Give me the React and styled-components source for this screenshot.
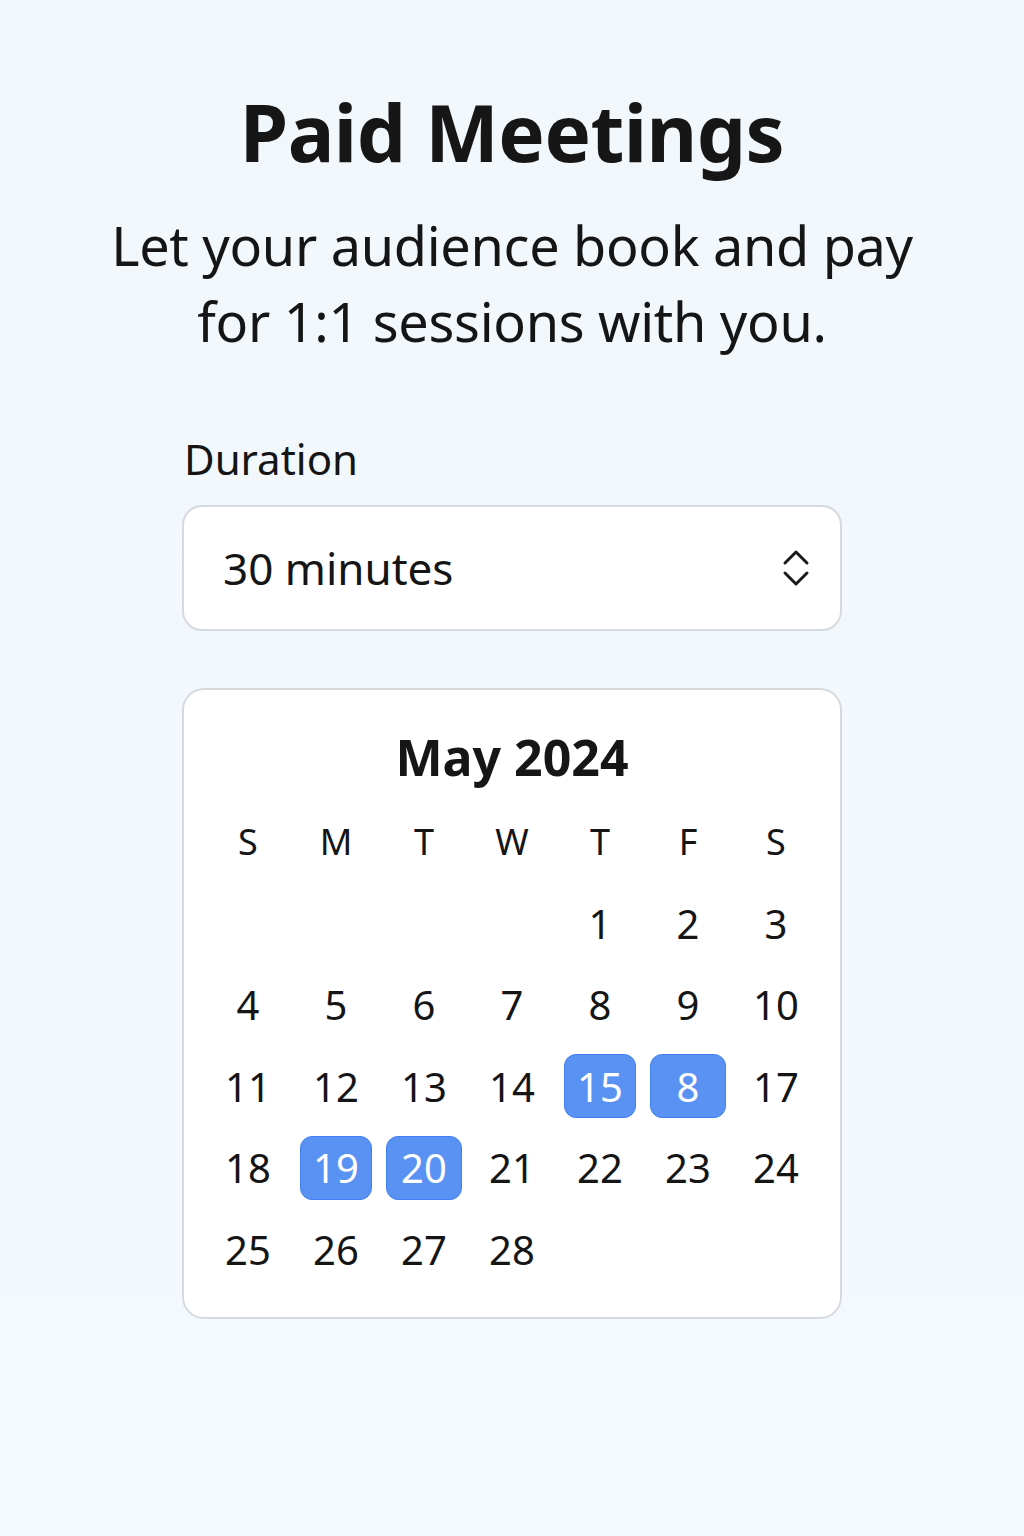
import React from "react";
import styled, { createGlobalStyle } from "styled-components";

const Global = createGlobalStyle`
  html, body { margin: 0; padding: 0; background: #f3f9fd; }
  body { font-family: "Noto Sans", "Open Sans", sans-serif; color: #151515; }
`;

const Page = styled.main`
  width: 1024px;
  min-height: 1536px;
  box-sizing: border-box;
  padding-top: 87px;
  display: flex;
  flex-direction: column;
  align-items: center;
  background: linear-gradient(180deg, #f2f7fb 0%, #f4f9fd 100%);
`;

const Title = styled.h1`
  margin: 0;
  font-size: 78px;
  line-height: 90px;
  font-weight: 700;
  letter-spacing: -0.5px;
  text-align: center;
  color: #161616;
`;

const Subtitle = styled.p`
  margin: 30px 0 0;
  font-size: 54px;
  line-height: 76px;
  font-weight: 400;
  letter-spacing: -0.3px;
  text-align: center;
  color: #151515;
`;

const Form = styled.section`
  width: 660px;
  margin-top: 72px;
  display: flex;
  flex-direction: column;
`;

const Label = styled.label`
  margin-left: 2px;
  font-size: 42px;
  line-height: 56px;
  color: #151515;
`;

const Select = styled.div`
  margin-top: 18px;
  height: 126px;
  box-sizing: border-box;
  border: 2px solid #d6dade;
  border-radius: 20px;
  background: #fff;
  display: flex;
  align-items: center;
  justify-content: space-between;
  padding: 0 30px 0 39px;
  font-size: 44px;
  color: #151515;
`;

const Card = styled.div`
  margin-top: 57px;
  box-sizing: border-box;
  border: 2px solid #d6dade;
  border-radius: 22px;
  background: #fff;
  padding: 35px 20px 27px;
  display: flex;
  flex-direction: column;
  align-items: center;
`;

const Month = styled.h2`
  margin: 0;
  font-size: 50px;
  line-height: 64px;
  font-weight: 700;
  color: #161616;
`;

const Grid = styled.div`
  margin-top: 12px;
  display: grid;
  grid-template-columns: repeat(7, 88px);
  grid-auto-rows: 81.5px;
  justify-items: center;
  align-items: center;
`;

const Weekday = styled.div`
  font-size: 36px;
  color: #151515;
`;

const Day = styled.div`
  width: ${(p) => (p.$wide ? 76 : 72)}px;
  height: 64px;
  box-sizing: border-box;
  display: flex;
  align-items: center;
  justify-content: center;
  font-size: 40px;
  border-radius: 12px;
  color: ${(p) => (p.$selected ? "#fff" : "#151515")};
  background: ${(p) => (p.$selected ? "#5a92f4" : "transparent")};
  border: 1px solid ${(p) => (p.$selected ? "#3f7ff0" : "transparent")};
`;

const UpDown = () => (
  <svg width="28" height="38" viewBox="0 0 28 38" fill="none" stroke="#1a1a1a" strokeWidth="3" strokeLinecap="round" strokeLinejoin="round">
    <path d="M3 14 L14 3 L25 14" />
    <path d="M3 24 L14 35 L25 24" />
  </svg>
);

const weekdays = ["S", "M", "T", "W", "T", "F", "S"];
const days = [
  null, null, null, null, 1, 2, 3,
  4, 5, 6, 7, 8, 9, 10,
  11, 12, 13, 14, 15, 8, 17,
  18, 19, 20, 21, 22, 23, 24,
  25, 26, 27, 28,
];
const selected = new Set([18, 19, 22, 23]);

export default function App() {
  return (
    <>
      <Global />
      <Page>
        <Title>Paid Meetings</Title>
        <Subtitle>
          Let your audience book and pay
          <br />
          for 1:1 sessions with you.
        </Subtitle>
        <Form>
          <Label>Duration</Label>
          <Select>
            <span>30 minutes</span>
            <UpDown />
          </Select>
          <Card>
            <Month>May 2024</Month>
            <Grid>
              {weekdays.map((w, i) => (
                <Weekday key={"w" + i}>{w}</Weekday>
              ))}
              {days.map((d, i) => (
                <Day key={"d" + i} $selected={selected.has(i)} $wide={i === 19 || i === 23}>
                  {d ?? ""}
                </Day>
              ))}
            </Grid>
          </Card>
        </Form>
      </Page>
    </>
  );
}
